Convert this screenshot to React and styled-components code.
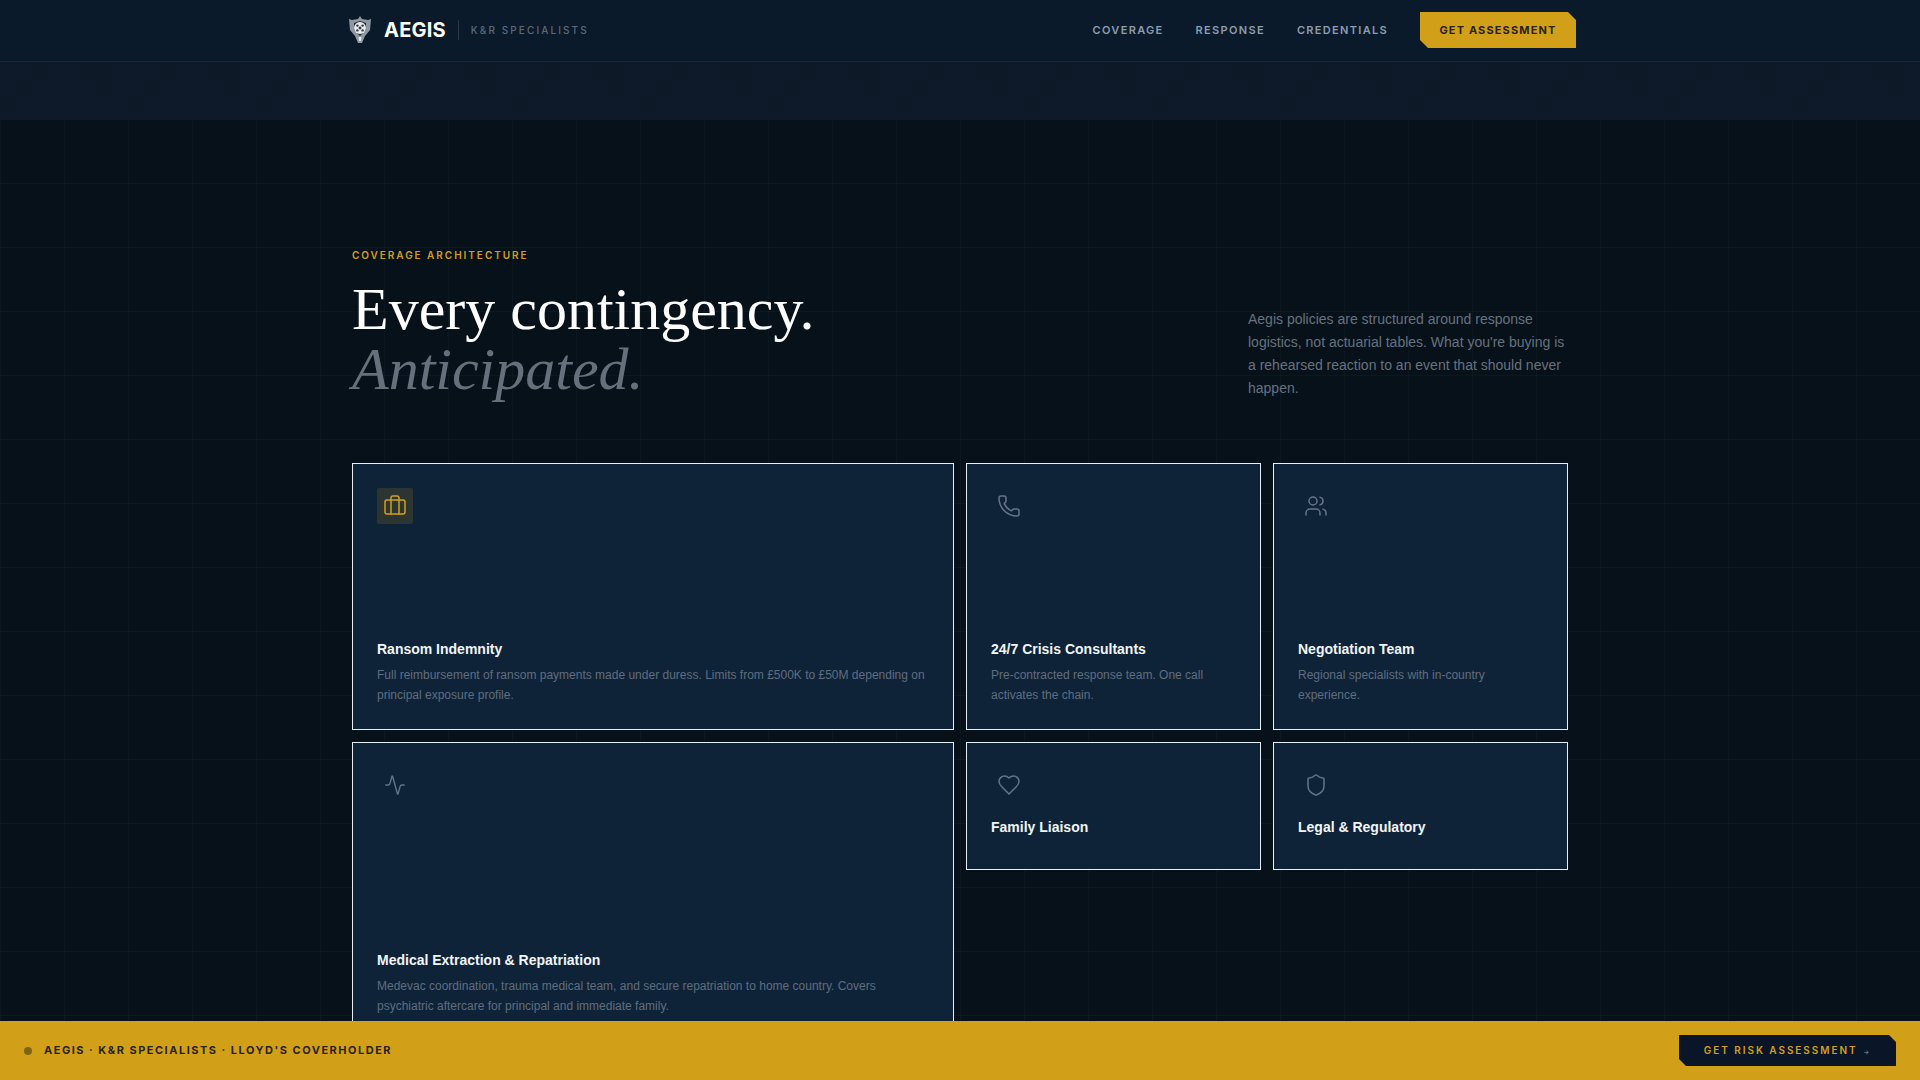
import React from "react";
import styled, { createGlobalStyle } from "styled-components";
import { Briefcase, Phone, Users, Activity, Shield } from "lucide-react";

const Global = createGlobalStyle`
  html, body { margin: 0; padding: 0; height: 1080px; overflow: hidden; }
  body {
    background-color: #07111a;
    background-image:
      linear-gradient(rgba(255,255,255,.024) 1px, transparent 1px),
      linear-gradient(90deg, rgba(255,255,255,.024) 1px, transparent 1px);
    background-size: 64px 64px;
    background-position: 0 -9px;
    font-family: "Liberation Sans", Arial, sans-serif;
  }
  * { box-sizing: border-box; }
`;

const Header = styled.header`
  height: 62px;
  background: #0a1a2a;
  border-bottom: 1px solid #14283a;
`;
const HeaderInner = styled.div`
  width: 1232px;
  height: 60px;
  margin: 0 auto;
  padding-left: 4px;
  display: flex;
  align-items: center;
  justify-content: space-between;
`;
const Brand = styled.div`
  display: flex;
  align-items: center;
`;
const Emblem = styled.svg`
  width: 24px;
  height: 28px;
  margin-right: 12px;
`;
const BrandName = styled.span`
  font-family: "Inter", sans-serif;
  font-size: 20px;
  font-weight: 700;
  letter-spacing: 0.2px;
  color: #fff;
`;
const BrandDivider = styled.span`
  width: 1px;
  height: 20px;
  margin: 0 12px;
  background: #24384c;
`;
const BrandTag = styled.span`
  font-family: "Inter", sans-serif;
  font-size: 10px;
  font-weight: 500;
  letter-spacing: 2.1px;
  color: #5a6a7c;
`;
const Nav = styled.nav`
  display: flex;
  align-items: center;
  gap: 32px;
`;
const NavLink = styled.a`
  font-family: "Inter", sans-serif;
  font-size: 11px;
  font-weight: 600;
  letter-spacing: 1.32px;
  color: #8d9cae;
`;
const CutButton = styled.button`
  border: 0;
  font-family: "Inter", sans-serif;
  font-size: 11px;
  font-weight: 700;
  letter-spacing: 1.15px;
  clip-path: polygon(0 0, calc(100% - 8px) 0, 100% 8px, 100% 100%, 8px 100%, 0 calc(100% - 8px));
`;
const HeaderButton = styled(CutButton)`
  width: 156px;
  height: 36px;
  background: #d2a018;
  color: #2a2310;
`;
const Band = styled.div`
  height: 58px;
  background-color: #0e1a2a;
  background-repeat: no-repeat;
  background-size: 100% 16px;
  background-position: 0 2px, 0 18px, 0 34px;
  background-image:
    repeating-linear-gradient(90deg, transparent 0 32px, #0d1927 32px 48px, transparent 48px 80px, #0d1927 80px 112px, transparent 112px 128px),
    repeating-linear-gradient(90deg, transparent 0 16px, #0d1927 16px 32px, transparent 32px 96px, #0d1927 96px 112px, transparent 112px 128px),
    repeating-linear-gradient(90deg, #0d1927 0 16px, transparent 16px 128px);
`;
const Main = styled.main`
  width: 1216px;
  margin: 0 auto;
  padding-top: 129px;
`;
const Hero = styled.section`
  display: flex;
  justify-content: space-between;
  align-items: flex-end;
  margin-bottom: 64px;
`;
const Eyebrow = styled.div`
  font-family: "Inter", sans-serif;
  font-size: 10px;
  font-weight: 600;
  letter-spacing: 1.96px;
  line-height: 12px;
  color: #d2a018;
  margin-bottom: 18px;
`;
const Title = styled.h1`
  margin: 0;
  font-family: "Liberation Serif", serif;
  font-size: 60px;
  font-weight: 400;
  line-height: 60px;
  color: #fff;
`;
const TitleEm = styled.em`
  display: block;
  color: #66707c;
`;
const Lead = styled.p`
  width: 320px;
  margin: 0 0 -1px;
  font-size: 14px;
  line-height: 23px;
  color: #66727f;
`;
const Grid = styled.div`
  display: grid;
  grid-template-columns: repeat(4, 295px);
  grid-template-rows: 267px 128px 159px;
  gap: 12px;
`;
const Card = styled.article`
  grid-column: span ${(p) => p.$cols || 1};
  grid-row: span ${(p) => p.$rows || 1};
  display: flex;
  flex-direction: column;
  justify-content: space-between;
  padding: 24px;
  background: #0f2338;
  border: 1px solid #e6edf5;
`;
const IconBox = styled.div`
  width: 36px;
  height: 36px;
  display: flex;
  align-items: center;
  justify-content: center;
  border-radius: 2px;
  color: ${(p) => (p.$active ? "#d2a018" : "#64748b")};
  background: ${(p) => (p.$active ? "rgba(212,160,23,.15)" : "transparent")};
`;
const CardBody = styled.div`
  min-height: 28px;
`;
const CardTitle = styled.h3`
  margin: 0;
  font-size: 14px;
  font-weight: 700;
  line-height: 20px;
  color: #f1f5f9;
`;
const CardText = styled.p`
  margin: 7px 0 0;
  font-size: 12px;
  line-height: 19.5px;
  color: #5f6d7e;
`;
const Bottom = styled.footer`
  position: fixed;
  left: 0;
  right: 0;
  bottom: 0;
  height: 59px;
  padding: 0 24px;
  background: #d2a018;
  display: flex;
  align-items: center;
  justify-content: space-between;
`;
const BottomLeft = styled.div`
  display: flex;
  align-items: center;
  gap: 12px;
`;
const Dot = styled.span`
  width: 8px;
  height: 8px;
  border-radius: 50%;
  background: #7d6416;
`;
const BottomText = styled.span`
  padding-bottom: 2px;
  font-family: "Inter", sans-serif;
  font-size: 11px;
  font-weight: 700;
  letter-spacing: 1.5px;
  color: #2a2310;
`;
const BottomButton = styled(CutButton)`
  width: 217px;
  height: 31px;
  padding-bottom: 2px;
  background: #0a1628;
  color: #d2a018;
  font-size: 10px;
  letter-spacing: 1.95px;
  font-weight: 600;
  clip-path: polygon(0 0, calc(100% - 7px) 0, 100% 7px, 100% 100%, 7px 100%, 0 calc(100% - 7px));
`;
const Arrow = styled.span`
  margin-left: 6px;
  font-size: 6px;
  color: #6f7c88;
`;

const Heart = ({ size, strokeWidth }) => (
  <svg width={size} height={size} viewBox="0 0 24 24" fill="none" stroke="currentColor" strokeWidth={strokeWidth} strokeLinecap="round" strokeLinejoin="round">
    <path d="M19 14c1.49-1.46 3-3.21 3-5.5A5.5 5.5 0 0 0 16.5 3c-1.76 0-3 .5-4.5 2-1.5-1.5-2.74-2-4.5-2A5.5 5.5 0 0 0 2 8.5c0 2.3 1.5 4.05 3 5.5l7 7Z" />
  </svg>
);

const cards = [
  { icon: Briefcase, title: "Ransom Indemnity", text: "Full reimbursement of ransom payments made under duress. Limits from £500K to £50M depending on principal exposure profile.", cols: 2, active: true },
  { icon: Phone, title: "24/7 Crisis Consultants", text: "Pre-contracted response team. One call activates the chain." },
  { icon: Users, title: "Negotiation Team", text: "Regional specialists with in-country experience." },
  { icon: Activity, size: 22, title: "Medical Extraction & Repatriation", text: "Medevac coordination, trauma medical team, and secure repatriation to home country. Covers psychiatric aftercare for principal and immediate family.", cols: 2, rows: 2 },
  { icon: Heart, title: "Family Liaison" },
  { icon: Shield, title: "Legal & Regulatory" },
];

export default function App() {
  return (
    <>
      <Global />
      <Header>
        <HeaderInner>
          <Brand>
            <Emblem viewBox="0 0 24 28">
              <path d="M12 0 L14 3 L20 4 L23 3 L22 14 L17 20 L14 27 L10 27 L7 20 L2 14 L1 3 L4 4 L10 3 Z" fill="#8f989f" />
              <path d="M12 5 L18 7 L18 14 L12 20 L6 14 L6 7 Z" fill="#1d2a36" />
              <circle cx="12" cy="12" r="6" fill="#e8eaec" />
              <circle cx="12" cy="12" r="1.4" fill="#2c3a46" />
              <circle cx="9.4" cy="9.6" r="1.2" fill="#2c3a46" />
              <circle cx="14.6" cy="9.6" r="1.2" fill="#2c3a46" />
              <circle cx="9.4" cy="14.4" r="1.2" fill="#2c3a46" />
              <circle cx="14.6" cy="14.4" r="1.2" fill="#2c3a46" />
              <path d="M10.5 21 h3 l-.6 4 h-1.8 z" fill="#e8eaec" />
            </Emblem>
            <BrandName>AEGIS</BrandName>
            <BrandDivider />
            <BrandTag>K&amp;R SPECIALISTS</BrandTag>
          </Brand>
          <Nav>
            <NavLink>COVERAGE</NavLink>
            <NavLink>RESPONSE</NavLink>
            <NavLink>CREDENTIALS</NavLink>
            <HeaderButton>GET ASSESSMENT</HeaderButton>
          </Nav>
        </HeaderInner>
      </Header>
      <Band />
      <Main>
        <Hero>
          <div>
            <Eyebrow>COVERAGE ARCHITECTURE</Eyebrow>
            <Title>
              Every contingency.
              <TitleEm>Anticipated.</TitleEm>
            </Title>
          </div>
          <Lead>
            Aegis policies are structured around response logistics, not actuarial tables. What you're buying is a rehearsed reaction to an event that should never happen.
          </Lead>
        </Hero>
        <Grid>
          {cards.map(({ icon: Icon, size, title, text, cols, rows, active }) => (
            <Card key={title} $cols={cols} $rows={rows}>
              <IconBox $active={active}>
                <Icon size={size || 24} strokeWidth={1.5} />
              </IconBox>
              <CardBody>
                <CardTitle>{title}</CardTitle>
                {text && <CardText>{text}</CardText>}
              </CardBody>
            </Card>
          ))}
        </Grid>
      </Main>
      <Bottom>
        <BottomLeft>
          <Dot />
          <BottomText>AEGIS · K&amp;R SPECIALISTS · LLOYD'S COVERHOLDER</BottomText>
        </BottomLeft>
        <BottomButton>GET RISK ASSESSMENT<Arrow>→</Arrow></BottomButton>
      </Bottom>
    </>
  );
}
